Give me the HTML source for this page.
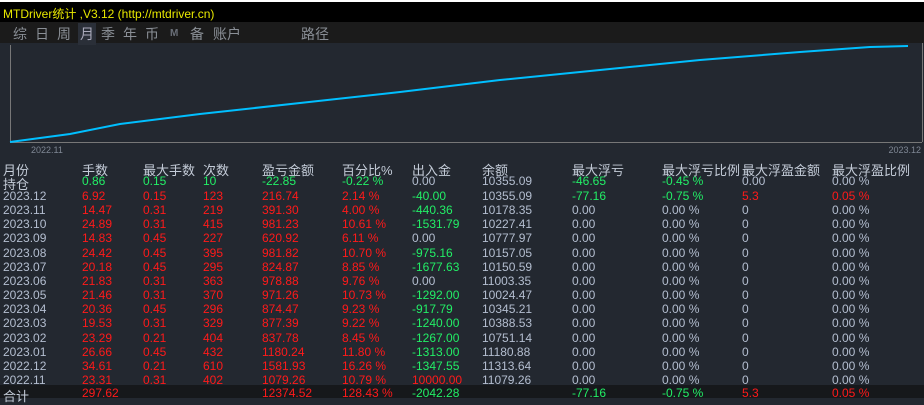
<!DOCTYPE html><html><head><meta charset="utf-8"><style>
body{margin:0;width:924px;height:400px;background:#232830;overflow:hidden;font-family:"Liberation Sans","Noto Sans CJK SC",sans-serif;position:relative}
.t{position:absolute;left:0;top:0;width:924px;height:22px;background:#000;border-top:2px solid #fff;box-sizing:border-box}
.t span{position:absolute;left:3px;top:3px;color:#e8e800;font-size:12px}
.n{position:absolute;left:0;top:22px;width:924px;height:21px;background:#1b1b1b}
.n span{position:absolute;top:2px;font-size:14px;color:#8a8f96}
.c{position:absolute;font-size:12px;white-space:nowrap}
.h{color:#c4ccd8;font-size:13px}
.g{color:#22ee66}.r{color:#ff1a1a}.w{color:#b4bed0}
.tot{position:absolute;left:0;top:385px;width:924px;height:13px;background:#16181b}
</style></head><body>
<div class="t"><span>MTDriver统计 ,V3.12 (http://mtdriver.cn)</span></div>
<div class="n">
<span style="left:13px">综</span><span style="left:35px">日</span><span style="left:57px">周</span>
<span style="left:78px;top:1px;background:#2a2f38;color:#aab;padding:1px 2px">月</span>
<span style="left:101px">季</span><span style="left:123px">年</span><span style="left:145px">币</span>
<span style="left:170px;font-size:10px;top:6px;font-weight:bold;color:#6a6f78">M</span><span style="left:190px">备</span><span style="left:213px">账户</span><span style="left:301px">路径</span>
</div>
<svg style="position:absolute;left:0;top:0" width="924" height="160">
<line x1="10.5" y1="45" x2="10.5" y2="142" stroke="#777"/>
<line x1="10" y1="142.5" x2="922" y2="142.5" stroke="#777"/>
<line x1="922.5" y1="43" x2="922.5" y2="142" stroke="#777"/>
<polyline fill="none" stroke="#00bfff" stroke-width="2" points="10,142 70,134 120,124 200,114 300,103 400,92 500,80 600,70 700,60 800,52 870,47 908,46"/>
<text x="31" y="153" fill="#7f8794" font-size="9" font-family="Liberation Sans">2022.11</text>
<text x="921" y="153" fill="#7f8794" font-size="9" text-anchor="end" font-family="Liberation Sans">2023.12</text>
</svg>
<div class="tot"></div>
<div id="tb"></div>
<script>
var X=[3,82,143,203,262,342,412,482,572,662,742,832];
var H=["月份","手数","最大手数","次数","盈亏金额","百分比%","出入金","余额","最大浮亏","最大浮亏比例","最大浮盈金额","最大浮盈比例"];
var rows=[
["持仓","g0.86","g0.15","g10","g-22.85","g-0.22 %","w0.00","w10355.09","g-46.65","g-0.45 %","w0.00","w0.00 %"],
["2023.12","r6.92","r0.15","r123","r216.74","r2.14 %","g-40.00","w10355.09","g-77.16","g-0.75 %","r5.3","r0.05 %"],
["2023.11","r14.47","r0.31","r219","r391.30","r4.00 %","g-440.36","w10178.35","w0.00","w0.00 %","w0","w0.00 %"],
["2023.10","r24.89","r0.31","r415","r981.23","r10.61 %","g-1531.79","w10227.41","w0.00","w0.00 %","w0","w0.00 %"],
["2023.09","r14.83","r0.45","r227","r620.92","r6.11 %","w0.00","w10777.97","w0.00","w0.00 %","w0","w0.00 %"],
["2023.08","r24.42","r0.45","r395","r981.82","r10.70 %","g-975.16","w10157.05","w0.00","w0.00 %","w0","w0.00 %"],
["2023.07","r20.18","r0.45","r295","r824.87","r8.85 %","g-1677.63","w10150.59","w0.00","w0.00 %","w0","w0.00 %"],
["2023.06","r21.83","r0.31","r363","r978.88","r9.76 %","w0.00","w11003.35","w0.00","w0.00 %","w0","w0.00 %"],
["2023.05","r21.46","r0.31","r370","r971.26","r10.73 %","g-1292.00","w10024.47","w0.00","w0.00 %","w0","w0.00 %"],
["2023.04","r20.36","r0.45","r296","r874.47","r9.23 %","g-917.79","w10345.21","w0.00","w0.00 %","w0","w0.00 %"],
["2023.03","r19.53","r0.31","r329","r877.39","r9.22 %","g-1240.00","w10388.53","w0.00","w0.00 %","w0","w0.00 %"],
["2023.02","r23.29","r0.21","r404","r837.78","r8.45 %","g-1267.00","w10751.14","w0.00","w0.00 %","w0","w0.00 %"],
["2023.01","r26.66","r0.45","r432","r1180.24","r11.80 %","g-1313.00","w11180.88","w0.00","w0.00 %","w0","w0.00 %"],
["2022.12","r34.61","r0.21","r610","r1581.93","r16.26 %","g-1347.55","w11313.64","w0.00","w0.00 %","w0","w0.00 %"],
["2022.11","r23.31","r0.31","r402","r1079.26","r10.79 %","r10000.00","w11079.26","w0.00","w0.00 %","w0","w0.00 %"],
["合计","r297.62","","","r12374.52","r128.43 %","g-2042.28","","g-77.16","g-0.75 %","r5.3","r0.05 %"]];
var s="";
H.forEach(function(h,i){s+='<div class="c h" style="left:'+X[i]+'px;top:160px">'+h+'</div>';});
rows.forEach(function(r,j){var y=j==0?174:(j==15?386:189+(j-1)*14.15);
r.forEach(function(v,i){if(!v)return;var cl,t;if(i==0){cl=(j==0||j==15)?"h":"w";t=v;}else{cl=v[0];t=v.slice(1);}
s+='<div class="c '+cl+'" style="left:'+X[i]+'px;top:'+y+'px">'+t+'</div>';});});
document.getElementById("tb").innerHTML=s;
</script>
</body></html>
